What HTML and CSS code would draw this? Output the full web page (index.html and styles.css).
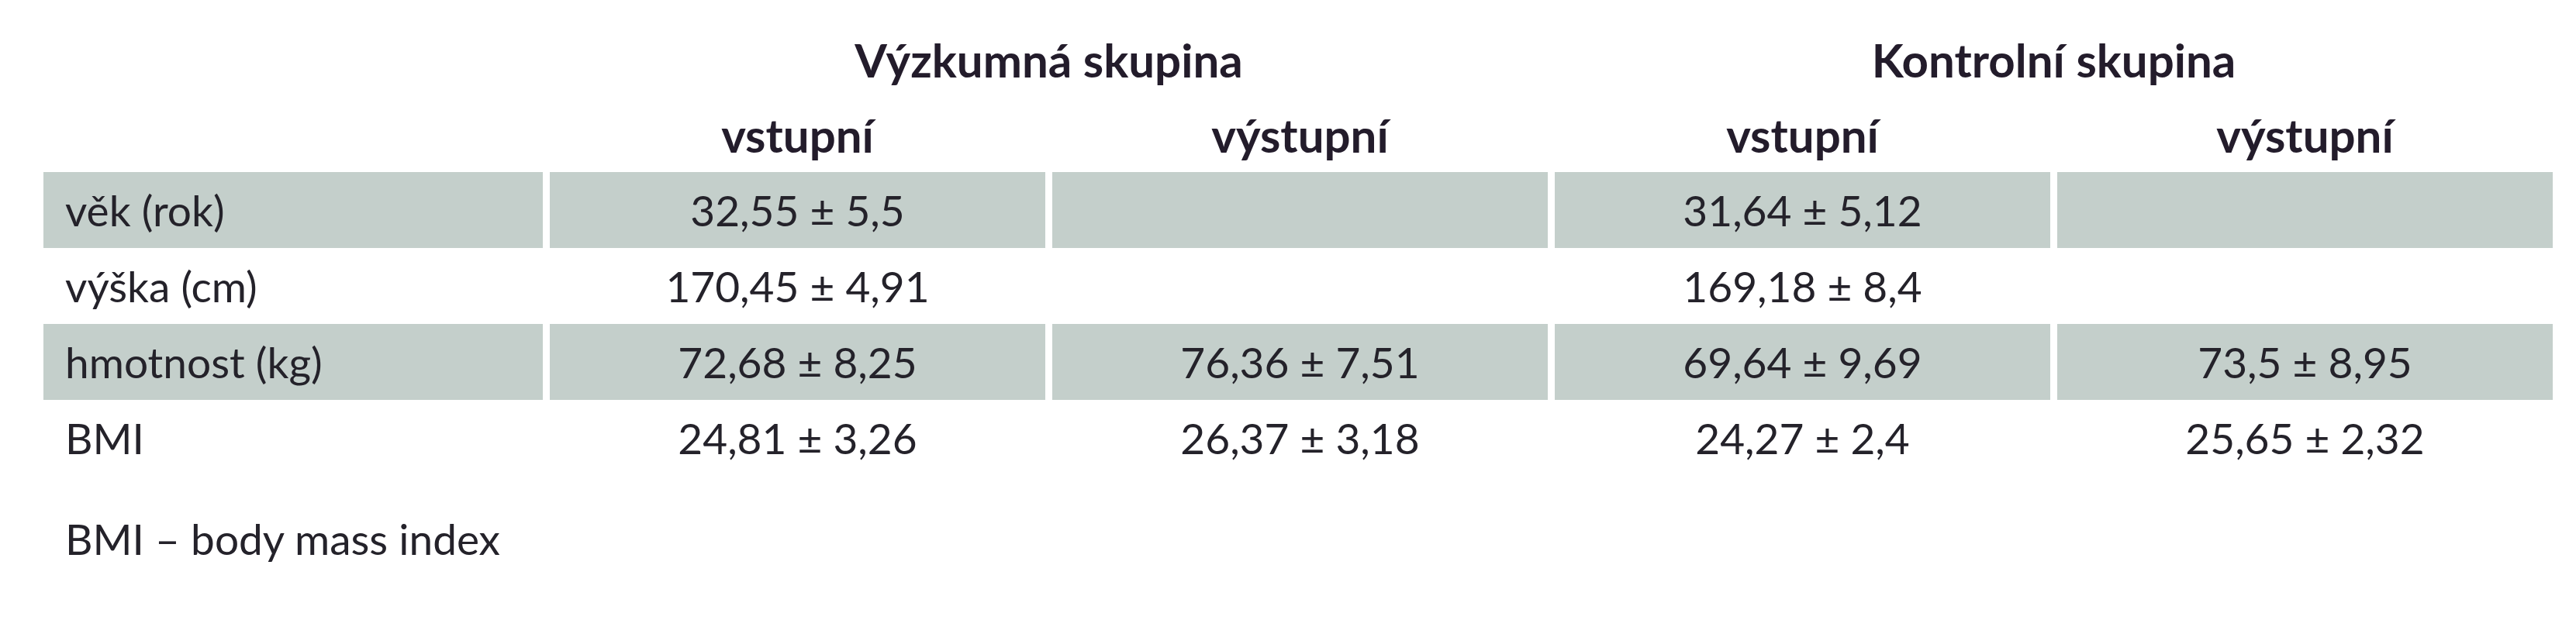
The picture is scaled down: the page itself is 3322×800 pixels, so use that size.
FILE: index.html
```html
<!DOCTYPE html>
<html lang="cs">
<head>
<meta charset="utf-8">
<title>Tabulka</title>
<link rel="stylesheet" href="styles.css">
</head>
<body>
<div class="wrap">
<table class="data">
  <colgroup>
    <col class="c-label">
    <col class="c-val">
    <col class="c-val">
    <col class="c-val">
    <col class="c-val">
  </colgroup>
  <thead>
    <tr class="hrow">
      <th></th>
      <th colspan="2" class="group">Výzkumná skupina</th>
      <th colspan="2" class="group">Kontrolní skupina</th>
    </tr>
    <tr class="hrow">
      <th></th>
      <th>vstupní</th>
      <th>výstupní</th>
      <th>vstupní</th>
      <th>výstupní</th>
    </tr>
  </thead>
  <tbody>
    <tr class="shade">
      <td class="label">věk (rok)</td>
      <td>32,55 ± 5,5</td>
      <td></td>
      <td>31,64 ± 5,12</td>
      <td></td>
    </tr>
    <tr>
      <td class="label">výška (cm)</td>
      <td>170,45 ± 4,91</td>
      <td></td>
      <td>169,18 ± 8,4</td>
      <td></td>
    </tr>
    <tr class="shade">
      <td class="label">hmotnost (kg)</td>
      <td>72,68 ± 8,25</td>
      <td>76,36 ± 7,51</td>
      <td>69,64 ± 9,69</td>
      <td>73,5 ± 8,95</td>
    </tr>
    <tr>
      <td class="label">BMI</td>
      <td>24,81 ± 3,26</td>
      <td>26,37 ± 3,18</td>
      <td>24,27 ± 2,4</td>
      <td>25,65 ± 2,32</td>
    </tr>
  </tbody>
</table>
<p class="note">BMI – body mass index</p>
</div>
</body>
</html>
```

FILE: styles.css
```css
html, body {
  margin: 0;
  padding: 0;
  background: #ffffff;
}
body {
  font-family: Lato, "Open Sans", "Noto Sans", sans-serif;
  color: #24222a;
}
.wrap {
  padding: 28px 0 0 47px;
}
.data {
  border-collapse: separate;
  border-spacing: 9px 0;
  table-layout: fixed;
  width: 3251px;
  font-size: 55px;
}
.c-label { width: 644px; }
.c-val { width: 639px; }
.data th,
.data td {
  padding: 0;
  text-align: center;
  vertical-align: middle;
  white-space: nowrap;
}
.hrow th {
  height: 97px;
  font-size: 60px;
  font-weight: 700;
  color: #231c2b;
}
.data tbody td {
  height: 98px;
  font-weight: 400;
}
.data td.label {
  text-align: left;
  padding-left: 28px;
}
.shade td {
  background: #c4cfcb;
}
.note {
  margin: 32px 0 0 37px;
  font-size: 55px;
  line-height: 98px;
}
```
